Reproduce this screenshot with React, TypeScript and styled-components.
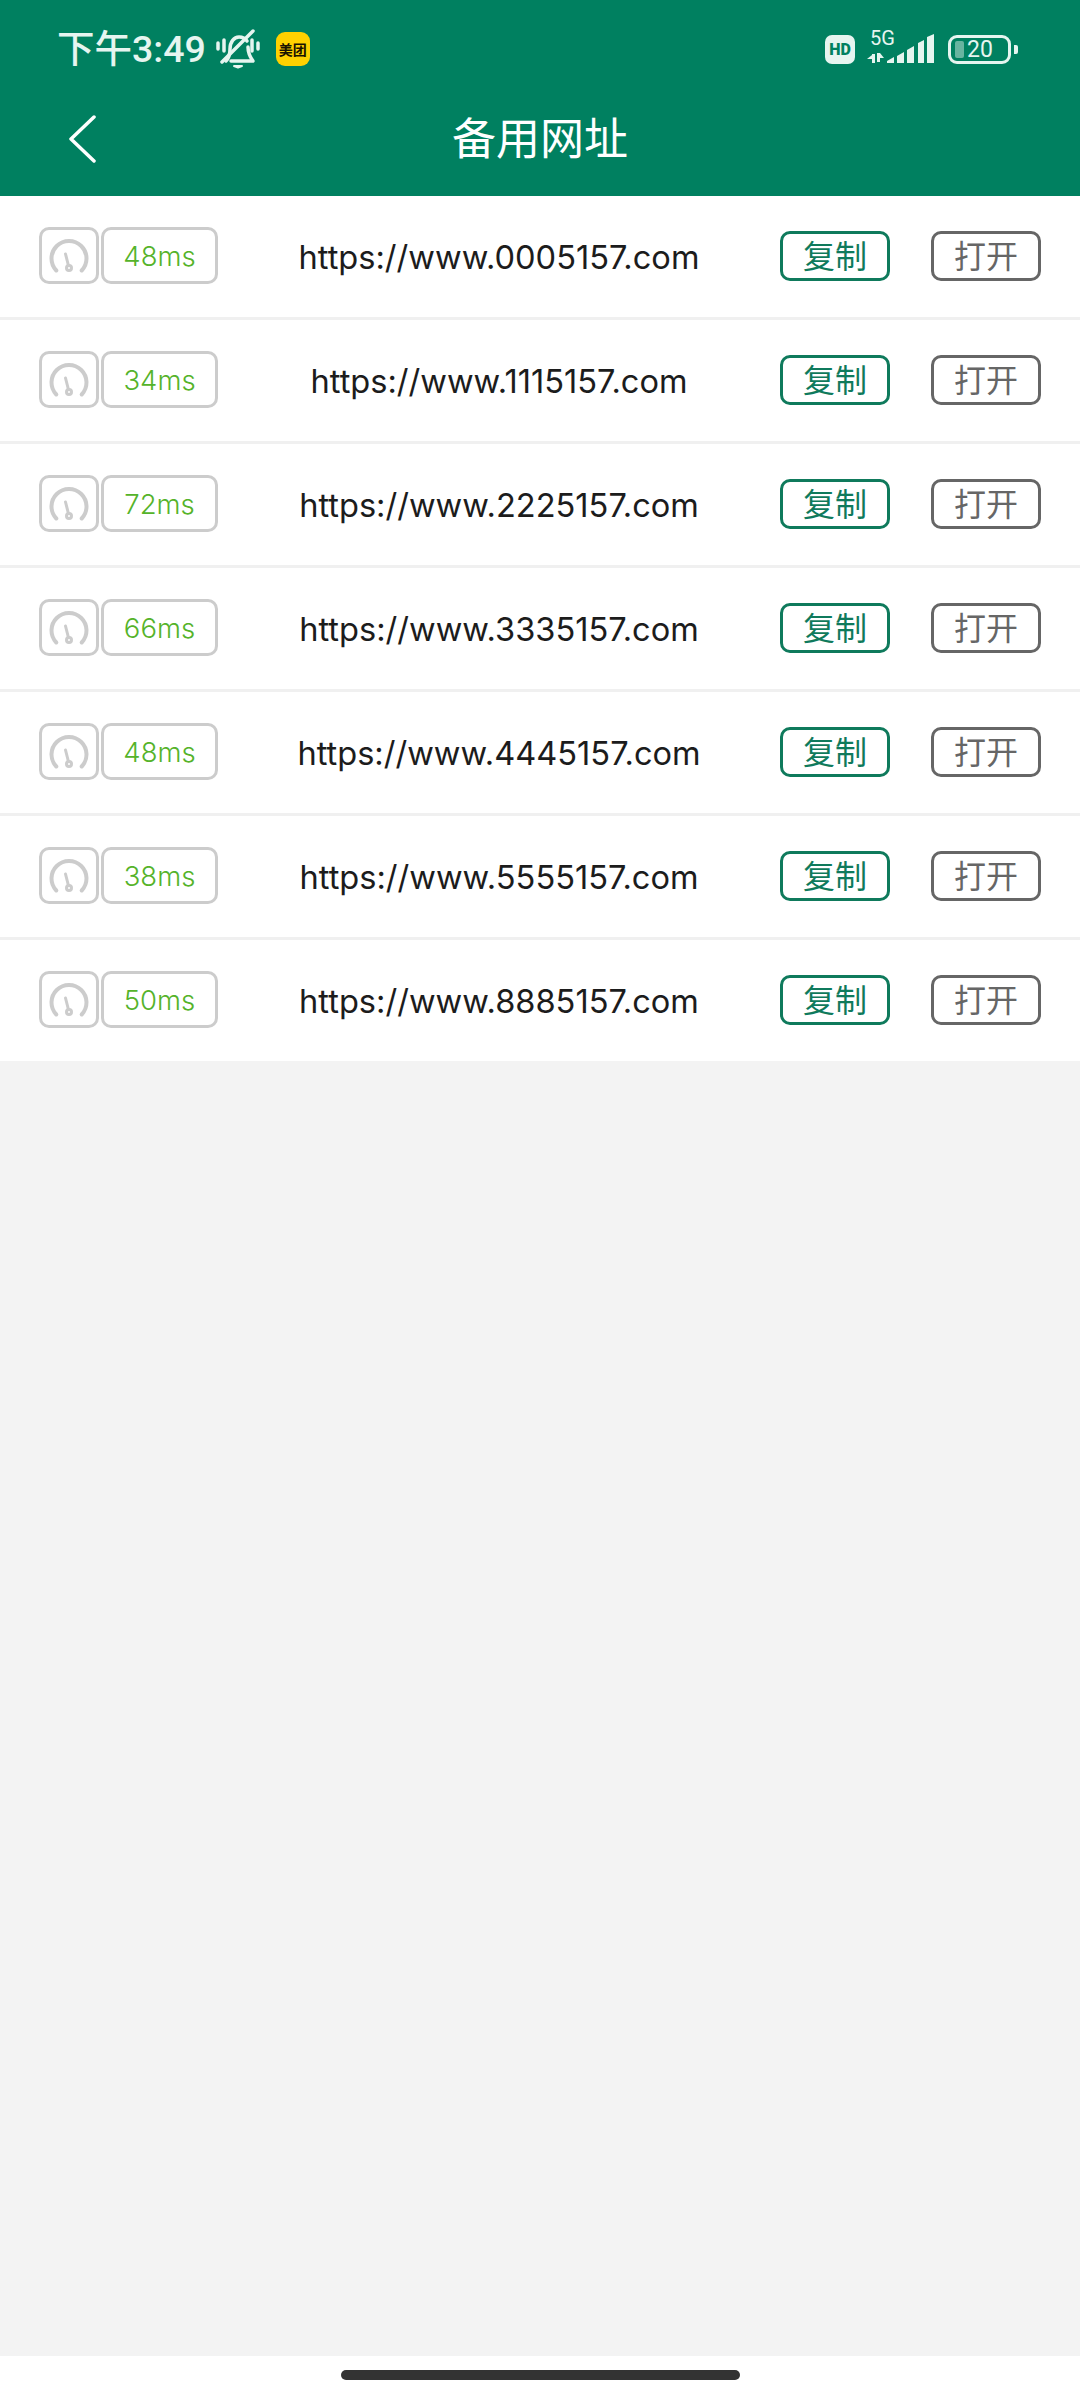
import React from "react";
import styled, { createGlobalStyle } from "styled-components";

const GlobalStyle = createGlobalStyle`
  html, body { margin: 0; padding: 0; background: #f3f3f3; }
  body { font-family: Inter, "Noto Sans CJK SC", sans-serif; }
`;

const Screen = styled.div`
  width: 1080px;
  height: 2400px;
  display: flex;
  flex-direction: column;
  background: #f3f3f3;
  overflow: hidden;
`;

const Header = styled.header`
  background: #008060;
  color: #e6f5f0;
`;

const StatusBar = styled.div`
  height: 62px;
  padding: 18px 62px 0 57px;
  display: flex;
  align-items: center;
  justify-content: space-between;
`;

const StatusGroup = styled.div`
  display: flex;
  align-items: center;
`;

const Clock = styled.span`
  font-family: Roboto, "Noto Sans CJK SC", sans-serif;
  font-size: 37.5px;
  line-height: 40px;
  font-weight: 500;
  margin-right: 10px;
`;

const AppBadge = styled.span`
  width: 34px;
  height: 34px;
  margin-left: 16px;
  border-radius: 9px;
  background: #ffd100;
  color: #1a1300;
  font-family: "Noto Sans CJK SC", sans-serif;
  font-size: 14px;
  font-weight: 700;
  line-height: 34px;
  text-align: center;
  white-space: nowrap;
`;

const HdBadge = styled.span`
  width: 30px;
  height: 29px;
  border-radius: 7px;
  background: #e6f5f0;
  color: #008060;
  font-family: Roboto, sans-serif;
  font-size: 16px;
  font-weight: 900;
  line-height: 29px;
  text-align: center;
`;

const Network = styled.div`
  position: relative;
  width: 67px;
  height: 34px;
  margin-left: 12px;
`;

const NetworkLabel = styled.span`
  position: absolute;
  left: 3px;
  top: -4px;
  font-family: Roboto, sans-serif;
  font-size: 20px;
  line-height: 20px;
`;

const Battery = styled.div`
  width: 63px;
  height: 29px;
  margin-left: 14px;
  box-sizing: border-box;
  border: 3px solid #e6f5f0;
  border-radius: 9px;
  display: flex;
  align-items: center;
  padding-left: 4px;
  gap: 3px;
`;

const BatteryLevel = styled.span`
  width: 9px;
  height: 17px;
  border-radius: 2px;
  background: rgba(230, 245, 240, 0.45);
`;

const BatteryText = styled.span`
  font-family: Roboto, sans-serif;
  font-size: 23px;
  line-height: 23px;
`;

const BatteryCap = styled.span`
  width: 4px;
  height: 9px;
  margin-left: 3px;
  border-radius: 0 2px 2px 0;
  background: #e6f5f0;
`;

const NavBar = styled.div`
  position: relative;
  height: 116px;
  padding-bottom: 4px;
  box-sizing: border-box;
  display: flex;
  align-items: center;
  justify-content: center;
  color: #fff;
`;

const BackButton = styled.span`
  position: absolute;
  left: 68px;
  top: 35px;
  display: flex;
`;

const Title = styled.h1`
  margin: 0;
  font-family: "Noto Sans CJK SC", sans-serif;
  font-size: 44px;
  font-weight: 400;
  line-height: 60px;
`;

const List = styled.div`
  background: #fff;
`;

const Row = styled.div`
  height: 121px;
  padding: 0 39px 2px;
  box-sizing: border-box;
  display: flex;
  align-items: center;
  & + & {
    box-sizing: content-box;
    border-top: 3px solid #f0f0f0;
    height: 119px;
  }
`;

const Outlined = styled.span`
  box-sizing: border-box;
  height: 57px;
  border: 3.5px solid #cccccc;
  border-radius: 10px;
  display: flex;
  align-items: center;
  justify-content: center;
`;

const GaugeBox = styled(Outlined)`
  width: 60px;
`;

const Latency = styled(Outlined)`
  width: 117px;
  margin-left: 2px;
  padding-top: 1px;
  color: #55b32a;
  font-size: 27.5px;
  font-weight: 350;
`;

const Url = styled.span`
  flex: 1;
  padding-top: 2px;
  text-align: center;
  color: #1c1c1c;
  font-size: 32.6px;
  font-weight: 370;
`;

const ActionButton = styled.button<{ $color: string }>`
  box-sizing: border-box;
  width: 110px;
  height: 50px;
  padding: 0 0 4px;
  border: 3px solid ${(props) => props.$color};
  border-radius: 10px;
  background: #fff;
  color: ${(props) => props.$color};
  font-family: "Noto Sans CJK SC", sans-serif;
  font-size: 32px;
  line-height: 40px;
  & + & {
    margin-left: 41px;
  }
`;

const Spacer = styled.div`
  flex: 1;
`;

const HomeArea = styled.div`
  height: 44px;
  background: #fff;
  display: flex;
  justify-content: center;
  padding-top: 14px;
  box-sizing: border-box;
`;

const HomePill = styled.span`
  width: 399px;
  height: 10px;
  border-radius: 5px;
  background: #333;
`;

const MuteBell = () => (
  <svg width="44" height="40" viewBox="0 0 44 40" fill="none" stroke="#e6f5f0" strokeWidth="3.5" strokeLinecap="round" strokeLinejoin="round">
    <path d="M2 14v6M8 11v11M36 11v11M42 14v6" />
    <path d="M10 32c3-3 4-6 4-12 0-7 4-12 9-12 3 0 6 1 8 4" />
    <path d="M32 18c0 6 2 10 5 14H15" />
    <path d="M6 33 37 2" />
    <path d="M18 37h8l-4 1.5z" fill="#e6f5f0" strokeWidth="2" />
  </svg>
);

const SignalBars = () => (
  <svg width="67" height="34" viewBox="0 0 67 34" fill="#e6f5f0" style={{ display: "block" }}>
    <path d="M5 22h3v9H5zM0 27h5v-4zM10 21h3v9h-3zM13 21l4 5h-4z" />
    <path d="M20 29l7-4v6h-7zM30 24l7-4v11h-7zM40 18l7-4v17h-7zM51 11l6-3v23h-6zM60 5l7-3v29h-7z" />
  </svg>
);

const GaugeIcon = () => (
  <svg width="42" height="40" viewBox="0 0 42 40" fill="none" stroke="#cccccc" strokeWidth="4" strokeLinecap="round">
    <path d="M8.3 34.5a17.5 17.5 0 1 1 25.4 0" />
    <path d="M17.5 18l2.8 11" strokeWidth="3" />
    <circle cx="21" cy="32" r="2.5" strokeWidth="3" />
  </svg>
);

const ChevronLeft = () => (
  <svg width="30" height="48" viewBox="0 0 30 48" fill="none" stroke="#fff" strokeWidth="3.5" strokeLinecap="round" strokeLinejoin="round">
    <path d="M26 2 3 24l23 22" />
  </svg>
);

const sites = [
  { url: "https://www.0005157.com", latency: "48ms" },
  { url: "https://www.1115157.com", latency: "34ms" },
  { url: "https://www.2225157.com", latency: "72ms" },
  { url: "https://www.3335157.com", latency: "66ms" },
  { url: "https://www.4445157.com", latency: "48ms" },
  { url: "https://www.5555157.com", latency: "38ms" },
  { url: "https://www.8885157.com", latency: "50ms" },
];

const App: React.FC = () => {
  return (
    <Screen>
      <GlobalStyle />
      <Header>
        <StatusBar>
          <StatusGroup>
            <Clock>下午3:49</Clock>
            <MuteBell />
            <AppBadge>美团</AppBadge>
          </StatusGroup>
          <StatusGroup>
            <HdBadge>HD</HdBadge>
            <Network>
              <NetworkLabel>5G</NetworkLabel>
              <SignalBars />
            </Network>
            <Battery>
              <BatteryLevel />
              <BatteryText>20</BatteryText>
            </Battery>
            <BatteryCap />
          </StatusGroup>
        </StatusBar>
        <NavBar>
          <BackButton>
            <ChevronLeft />
          </BackButton>
          <Title>备用网址</Title>
        </NavBar>
      </Header>
      <List>
        {sites.map((site) => (
          <Row key={site.url}>
            <GaugeBox>
              <GaugeIcon />
            </GaugeBox>
            <Latency>{site.latency}</Latency>
            <Url>{site.url}</Url>
            <ActionButton $color="#0f7a5c">复制</ActionButton>
            <ActionButton $color="#666666">打开</ActionButton>
          </Row>
        ))}
      </List>
      <Spacer />
      <HomeArea>
        <HomePill />
      </HomeArea>
    </Screen>
  );
};

export default App;
